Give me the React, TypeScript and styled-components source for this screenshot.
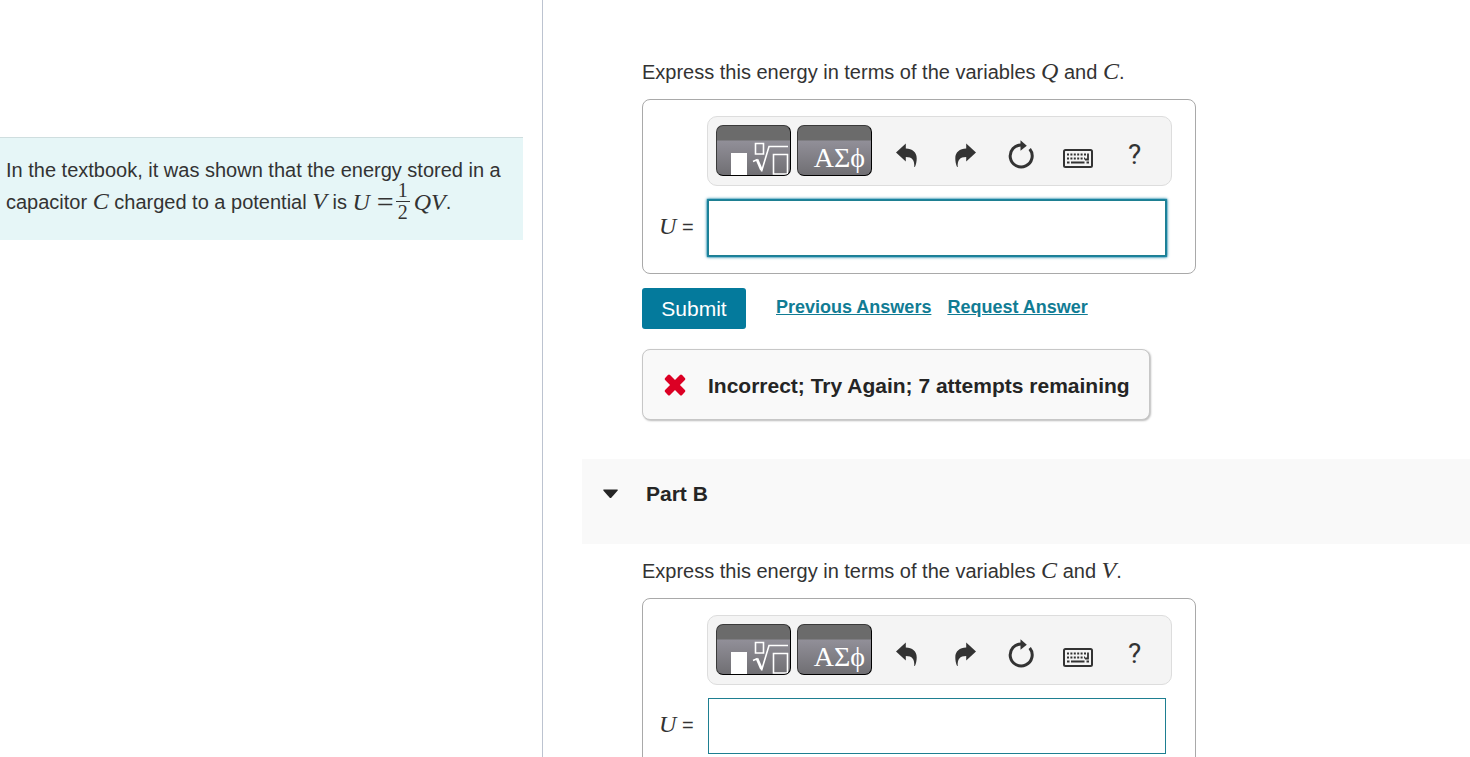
import React from "react";
import styled, { createGlobalStyle } from "styled-components";

const GlobalStyle = createGlobalStyle`
  *, *::before, *::after { box-sizing: border-box; }
  body {
    margin: 0;
    background: #ffffff;
    color: #333333;
    font-family: "Liberation Sans", Arial, sans-serif;
    font-size: 20px;
  }
`;

const Page = styled.div`
  display: grid;
  grid-template-columns: 543px minmax(0, 1fr);
  height: 100vh;
  overflow: hidden;
`;

const Sidebar = styled.aside`
  padding: 137px 19px 0 0;
  border-right: 1px solid #bcc3d0;
`;

const Intro = styled.p`
  margin: 0;
  height: 103px;
  padding: 16px 6px;
  line-height: 32px;
  white-space: nowrap;
  background: #e6f6f7;
  border-top: 1px solid #cfdedf;
`;

const Main = styled.main`
  min-width: 0;
  padding: 56px 0 0 39px;
  overflow: hidden;
`;

const Section = styled.section`
  padding-left: 60px;
`;

const Prompt = styled.p`
  margin: 0 0 11px;
  line-height: 32px;
`;

const Variable = styled.i`
  font-family: "Liberation Serif", "Times New Roman", serif;
  font-size: 24px;
  line-height: 24px;
`;

const Equation = styled.span`
  display: inline-flex;
  align-items: center;
  height: 28px;
  margin-bottom: 4px;
  vertical-align: middle;
  font-family: "Liberation Serif", "Times New Roman", serif;
  font-size: 24px;
`;

const Equals = styled.span`
  padding: 0 2px 0 7px;
  font-size: 30px;
`;

const Fraction = styled.span`
  display: inline-flex;
  flex-direction: column;
  align-items: center;
  width: 14px;
  margin-right: 4px;
  font-size: 20px;
  line-height: 21px;
`;

const Numerator = styled.span`
  width: 100%;
  text-align: center;
  border-bottom: 1px solid #333333;
`;

const Card = styled.form`
  display: flex;
  flex-direction: column;
  gap: 13px;
  width: 554px;
  padding: 16px 23px 16px 16px;
  border: 1px solid #a9a9a9;
  border-radius: 8px;
`;

const Toolbar = styled.div`
  display: flex;
  align-items: flex-start;
  height: 70px;
  margin-left: 48px;
  padding: 8px;
  background: #f4f4f4;
  border: 1px solid #dddddd;
  border-radius: 10px;
`;

const PaletteButton = styled.button`
  display: flex;
  justify-content: flex-end;
  align-items: flex-end;
  width: 75px;
  height: 51px;
  margin-right: 6px;
  padding: 0;
  overflow: hidden;
  color: #ffffff;
  line-height: 34px;
  background: linear-gradient(#6b6b6b 0 14px, #918f98 15px, #706f73 100%);
  border: 1px solid #3a3a3a;
  border-right-color: #000000;
  border-bottom-color: #000000;
  border-radius: 7px;
`;

const Greek = styled.span`
  padding-right: 6px;
  font-family: "Liberation Serif", "DejaVu Serif", serif;
  font-size: 28px;
`;

const ToolButton = styled.button`
  display: flex;
  justify-content: center;
  align-items: center;
  width: 57px;
  height: 51px;
  padding: 8px 0 0;
  flex: none;
  color: #333333;
  font-family: Roboto, sans-serif;
  font-size: 28px;
  line-height: 32px;
  background: transparent;
  border: 0;
`;

const AnswerRow = styled.div`
  display: flex;
  align-items: center;
`;

const AnswerLabel = styled.label`
  width: 48px;
  padding-bottom: 3px;
  white-space: nowrap;
  font-size: 20px;
`;

const AnswerField = styled.div<{ $active?: boolean }>`
  width: 460px;
  padding: ${(p) => (p.$active ? "1px" : "0 1px")};
`;

const AnswerInput = styled.input<{ $active?: boolean }>`
  display: block;
  width: 100%;
  height: 56px;
  padding: 0 12px;
  font-size: 20px;
  background: #ffffff;
  border: 1px solid #1e7f91;
  border-radius: 0;
  box-shadow: ${(p) => (p.$active ? "0 0 3px 1px #047a9c, 0 0 1px 1px #3d93ab" : "none")};
  outline: none;
`;

const Actions = styled.div`
  display: flex;
  align-items: center;
  margin-top: 14px;
`;

const SubmitButton = styled.button`
  width: 104px;
  height: 41px;
  margin-right: 30px;
  padding: 0;
  color: #ffffff;
  font-family: inherit;
  font-size: 21px;
  background: #047a9c;
  border: 0;
  border-radius: 3px;
`;

const ActionLink = styled.a`
  margin-right: 16px;
  padding-bottom: 3px;
  color: #117c94;
  font-size: 18px;
  font-weight: 700;
  line-height: 24px;
  text-decoration: underline;
`;

const Feedback = styled.div`
  display: flex;
  align-items: center;
  width: 508px;
  height: 71px;
  margin-top: 20px;
  padding: 2px 0 0 21px;
  gap: 22px;
  color: #252525;
  font-size: 21px;
  font-weight: 700;
  white-space: nowrap;
  background: #f9f9f9;
  border: 1px solid #c7c7c7;
  border-radius: 8px;
  box-shadow: 1px 1px 2px #bbbbbb;
`;

const PartHeader = styled.button`
  display: flex;
  align-items: center;
  gap: 27px;
  width: 100%;
  height: 85px;
  margin: 39px 0 11px;
  padding: 0 20px 15px;
  color: #252525;
  font-family: inherit;
  font-size: 21px;
  font-weight: 700;
  background: #f9f9f9;
  border: 0;
`;

const TemplatesIcon = () => (
  <svg width="60" height="34" viewBox="0 0 60 34" fill="none" stroke="#fff" aria-hidden="true">
    <path d="M1 12h16v22H1z" fill="#fff" stroke="none" />
    <path d="M25.500 2.500h8v10.500h-8z" strokeWidth="1.600" />
    <path d="M23 20.500l4.500-2" strokeWidth="1.500" />
    <path d="M27 18.500L31.500 29" strokeWidth="2.800" />
    <path d="M31.500 30.500L39 5.500H58" strokeWidth="1.600" />
    <path d="M43.500 13.500h14V33h-14z" strokeWidth="1.600" />
  </svg>
);

const ARROW = "M0 9.500L9.800.5v5c6.500.3 10.900 3.500 10.900 9.800 0 3.200-.5 6-1.800 8.700h-.6c.3-7-2-10-8.500-10v4.500z";

const UndoIcon = () => (
  <svg width="21" height="24" viewBox="0 0 21 24" fill="#333" aria-hidden="true">
    <path d={ARROW} />
  </svg>
);

const RedoIcon = () => (
  <svg width="25" height="24" viewBox="-4 0 25 24" fill="#333" aria-hidden="true">
    <path d={ARROW} transform="matrix(-1 0 0 1 21 0)" />
  </svg>
);

const ResetIcon = () => (
  <svg width="26" height="29" viewBox="0 0 26 29" fill="none" stroke="#333" aria-hidden="true">
    <path d="M14 5A11 11 0 1 0 21.700 9" strokeWidth="3" />
    <path d="M12.500.3L18.800 5.800l-6.300 5z" fill="#333" stroke="none" />
  </svg>
);

const KeyboardIcon = () => (
  <svg width="30" height="26" viewBox="0 0 30 26" fill="none" stroke="#333" aria-hidden="true">
    <rect x="1" y="8" width="28" height="17" rx="1.500" strokeWidth="2" />
    <path d="M4 12.500h19" strokeWidth="2" strokeDasharray="2 1.400" />
    <path d="M4 16.500h18" strokeWidth="2" strokeDasharray="2 1.400" />
    <path d="M25 11.500v6h-3" strokeWidth="1.800" />
    <path d="M4 20.500h2.500M8 20.500h13.500M23.500 20.500H26" strokeWidth="2" />
  </svg>
);

const CrossIcon = () => (
  <svg width="22" height="24" viewBox="0 0 22 24" fill="#dc0024" aria-hidden="true">
    <rect x="-1" y="7.500" width="24" height="7" rx="1.500" transform="rotate(45 11 11)" />
    <rect x="-1" y="7.500" width="24" height="7" rx="1.500" transform="rotate(-45 11 11)" />
  </svg>
);

const CaretIcon = () => (
  <svg width="17" height="10" viewBox="0 0 17 10" fill="#252525" aria-hidden="true">
    <path d="M2 .5h13q1.500 0 .5 1.200L9.500 8.500q-1 1-2 0L1.500 1.700Q.5.5 2 .5z" />
  </svg>
);

function AnswerCard({ id, active }: { id: string; active?: boolean }) {
  return (
    <Card onSubmit={(e) => e.preventDefault()}>
      <Toolbar role="toolbar" aria-label="Equation tools">
        <PaletteButton type="button" aria-label="Templates">
          <TemplatesIcon />
        </PaletteButton>
        <PaletteButton type="button" aria-label="Symbols">
          <Greek>ΑΣϕ</Greek>
        </PaletteButton>
        <ToolButton type="button" aria-label="Undo"><UndoIcon /></ToolButton>
        <ToolButton type="button" aria-label="Redo"><RedoIcon /></ToolButton>
        <ToolButton type="button" aria-label="Reset"><ResetIcon /></ToolButton>
        <ToolButton type="button" aria-label="Keyboard shortcuts"><KeyboardIcon /></ToolButton>
        <ToolButton type="button" aria-label="Help">?</ToolButton>
      </Toolbar>
      <AnswerRow>
        <AnswerLabel htmlFor={id}><Variable>U</Variable> =</AnswerLabel>
        <AnswerField $active={active}>
          <AnswerInput id={id} type="text" autoComplete="off" $active={active} />
        </AnswerField>
      </AnswerRow>
    </Card>
  );
}

export default function App() {
  return (
    <>
      <GlobalStyle />
      <Page>
        <Sidebar>
          <Intro>
            In the textbook, it was shown that the energy stored in a<br />
            capacitor <Variable>C</Variable> charged to a potential <Variable>V</Variable> is{" "}
            <Equation>
              <i>U</i>
              <Equals>=</Equals>
              <Fraction>
                <Numerator>1</Numerator>
                <span>2</span>
              </Fraction>
              <i>QV</i>
            </Equation>
            .
          </Intro>
        </Sidebar>
        <Main>
          <Section>
            <Prompt>
              Express this energy in terms of the variables <Variable>Q</Variable> and <Variable>C</Variable>.
            </Prompt>
            <AnswerCard id="answer-a" active />
            <Actions>
              <SubmitButton type="button">Submit</SubmitButton>
              <ActionLink href="#previous">Previous Answers</ActionLink>
              <ActionLink href="#request">Request Answer</ActionLink>
            </Actions>
            <Feedback role="status">
              <CrossIcon />
              Incorrect; Try Again; 7 attempts remaining
            </Feedback>
          </Section>
          <PartHeader type="button" aria-expanded="true">
            <CaretIcon />
            Part B
          </PartHeader>
          <Section>
            <Prompt>
              Express this energy in terms of the variables <Variable>C</Variable> and <Variable>V</Variable>.
            </Prompt>
            <AnswerCard id="answer-b" />
          </Section>
        </Main>
      </Page>
    </>
  );
}
